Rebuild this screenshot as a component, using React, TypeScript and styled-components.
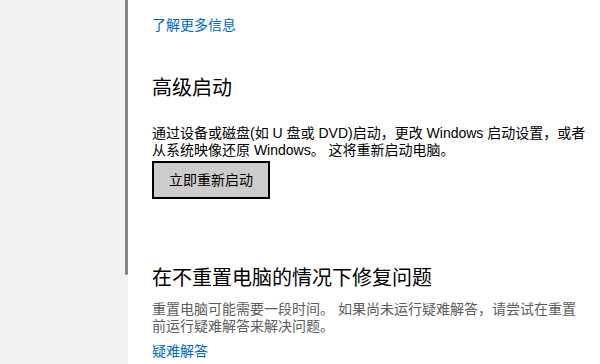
import React from "react";
import styled, { createGlobalStyle } from "styled-components";

const Global = createGlobalStyle`
  html, body { margin: 0; padding: 0; background: #ffffff; }
  body { font-family: "Liberation Sans", "Noto Sans CJK SC", sans-serif; }
`;

const Page = styled.div`
  display: flex;
  width: 600px;
  height: 364px;
  overflow: hidden;
  background: #ffffff;
`;

const NavPane = styled.div`
  flex: 0 0 128px;
  display: flex;
  justify-content: flex-end;
  align-items: flex-start;
  background: #f2f2f2;
`;

const ScrollThumb = styled.div`
  width: 3px;
  height: 275px;
  background: #858585;
  border-radius: 0 0 2px 2px;
`;

const Content = styled.main`
  flex: 1;
  display: flex;
  flex-direction: column;
  align-items: flex-start;
  padding: 16px 0 0 24px;
  font-family: "Liberation Sans", "Noto Sans CJK SC", sans-serif;
`;

const Link = styled.a<{ $gap?: number }>`
  display: block;
  margin-top: ${(p) => p.$gap ?? 0}px;
  font-size: 14px;
  line-height: 19px;
  color: #0067c0;
  text-decoration: none;
  cursor: pointer;
`;

const Heading = styled.h2<{ $gap: number }>`
  margin: ${(p) => p.$gap}px 0 0;
  font-size: 20px;
  font-weight: 400;
  line-height: 28px;
  color: #000000;
`;

const Paragraph = styled.p<{ $gap: number; $muted?: boolean }>`
  margin: ${(p) => p.$gap}px 0 0;
  font-size: 14px;
  line-height: 17px;
  white-space: nowrap;
  color: ${(p) => (p.$muted ? "#5d5d5d" : "#000000")};
`;

const Button = styled.button`
  margin-top: 2px;
  box-sizing: border-box;
  width: 118px;
  height: 38px;
  padding: 0;
  border: 2px solid #000000;
  background: #cccccc;
  color: #000000;
  font-family: inherit;
  font-size: 14px;
  line-height: 19px;
  cursor: pointer;
`;

export default function App() {
  return (
    <>
      <Global />
      <Page>
        <NavPane>
          <ScrollThumb />
        </NavPane>
        <Content>
          <Link>了解更多信息</Link>
          <Heading $gap={39}>高级启动</Heading>
          <Paragraph $gap={23}>
            通过设备或磁盘(如 U 盘或 DVD)启动，更改 Windows 启动设置，或者
            <br />
            从系统映像还原 Windows。 这将重新启动电脑。
          </Paragraph>
          <Button>立即重新启动</Button>
          <Heading $gap={65}>在不重置电脑的情况下修复问题</Heading>
          <Paragraph $gap={9} $muted>
            重置电脑可能需要一段时间。 如果尚未运行疑难解答，请尝试在重置
            <br />
            前运行疑难解答来解决问题。
          </Paragraph>
          <Link $gap={7}>疑难解答</Link>
        </Content>
      </Page>
    </>
  );
}
